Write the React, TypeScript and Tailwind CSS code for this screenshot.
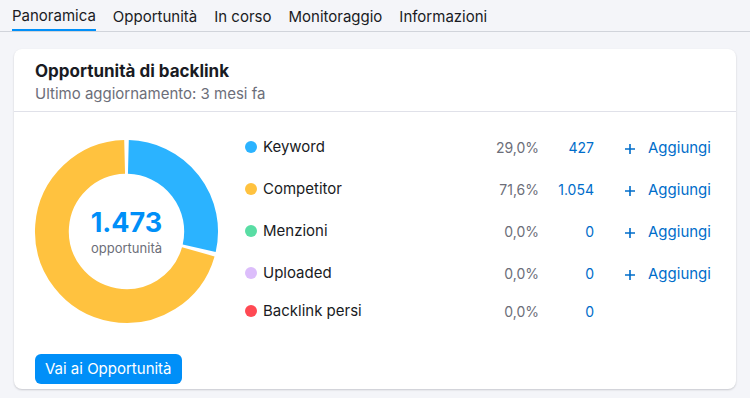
import React from "react";

const TABS = ["Panoramica", "Opportunità", "In corso", "Monitoraggio", "Informazioni"];

type Row = { label: string; dot: string; pct: string; count: string; add: boolean };

const ROWS: Row[] = [
  { label: "Keyword", dot: "bg-[#2bb3ff]", pct: "29,0%", count: "427", add: true },
  { label: "Competitor", dot: "bg-[#ffc23f]", pct: "71,6%", count: "1.054", add: true },
  { label: "Menzioni", dot: "bg-[#59dda4]", pct: "0,0%", count: "0", add: true },
  { label: "Uploaded", dot: "bg-[#dcbdfb]", pct: "0,0%", count: "0", add: true },
  { label: "Backlink persi", dot: "bg-[#ff4953]", pct: "0,0%", count: "0", add: false },
];

// arc path for a ring segment, angles in turns from 12 o'clock clockwise
function arc(cx: number, cy: number, r: number, a0: number, a1: number) {
  const p = (a: number) => {
    const t = a * Math.PI * 2;
    return [cx + r * Math.sin(t), cy - r * Math.cos(t)];
  };
  const [x0, y0] = p(a0);
  const [x1, y1] = p(a1);
  const large = a1 - a0 > 0.5 ? 1 : 0;
  return `M ${x0} ${y0} A ${r} ${r} 0 ${large} 1 ${x1} ${y1}`;
}

function Donut() {
  const blue = 427 / 1473;
  const gap = 0.004;
  return (
    <div className="relative h-[185px] w-[185px] shrink-0">
      <svg width="185" height="185" viewBox="0 0 186 186">
        <path d={arc(93, 93, 75, gap, blue - gap)} stroke="#2bb3ff" strokeWidth="34" fill="none" />
        <path d={arc(93, 93, 75, blue + gap, 1 - gap)} stroke="#ffc23f" strokeWidth="34" fill="none" />
      </svg>
      <div className="absolute inset-0 flex flex-col items-center justify-center">
        <div className="text-[27px] font-bold leading-[32px] text-[#008ff8]">1.473</div>
        <div className="text-[13px] leading-[18px] text-[#6c6e79]">opportunità</div>
      </div>
    </div>
  );
}

function Plus() {
  return (
    <svg width="12" height="12" viewBox="0 0 12 12" className="shrink-0">
      <path d="M6 1v10M1 6h10" stroke="#006dca" strokeWidth="1.6" />
    </svg>
  );
}

export default function App() {
  return (
    <div
      className="h-[398px] w-[750px] overflow-hidden bg-[#f4f5f9] text-[#191b23]"
      style={{ fontFamily: "Inter, 'Noto Sans', sans-serif" }}
    >
      <div className="flex h-[32px] gap-[17px] border-b border-[#d1d4db] px-[12px]">
        {TABS.map((t, i) => (
          <div
            key={t}
            className={`flex h-full items-center pt-[3px] text-[15px] ${
              i === 0 ? "border-b-2 border-[#008ff8]" : ""
            }`}
          >
            {t}
          </div>
        ))}
      </div>

      <div className="mx-[14px] mt-[17px] h-[340px] rounded-[8px] bg-white shadow-[0_1px_2px_rgba(25,27,35,0.2)]">
        <div className="border-b border-[#e0e1e9] px-[21px] pb-[7px] pt-[11px]">
          <div className="text-[17px] font-bold leading-[22px]">Opportunità di backlink</div>
          <div className="mt-[2px] text-[15px] leading-[20px] text-[#6c6e79]">
            Ultimo aggiornamento: 3 mesi fa
          </div>
        </div>

        <div className="flex gap-[26px] pl-[20px] pr-[26px] pt-[27px]">
          <Donut />
          <div className="mt-[-13px] flex-1">
            {ROWS.map((r) => (
              <div key={r.label} className={`flex items-center ${r.add ? "h-[42px]" : "h-[34px]"}`}>
                <div className="flex flex-1 items-center gap-[6px] text-[15px]">
                  <span className={`h-[12px] w-[12px] rounded-full ${r.dot}`} />
                  {r.label}
                </div>
                <div className="w-[70px] text-right text-[14px] text-[#6c6e79]">{r.pct}</div>
                <div className="w-[55px] text-right text-[14px] text-[#006dca]">{r.count}</div>
                <div className="ml-[30px] flex w-[86px] items-center gap-[12px] pt-[3px]">
                  {r.add && (
                    <>
                      <Plus />
                      <span className="text-[15px] text-[#006dca]">Aggiungi</span>
                    </>
                  )}
                </div>
              </div>
            ))}
          </div>
        </div>

        <div className="px-[21px] pt-[26px]">
          <button className="h-[30px] rounded-[6px] bg-[#008ff8] px-[10px] text-[15px] text-white">
            Vai ai Opportunità
          </button>
        </div>
      </div>
    </div>
  );
}
